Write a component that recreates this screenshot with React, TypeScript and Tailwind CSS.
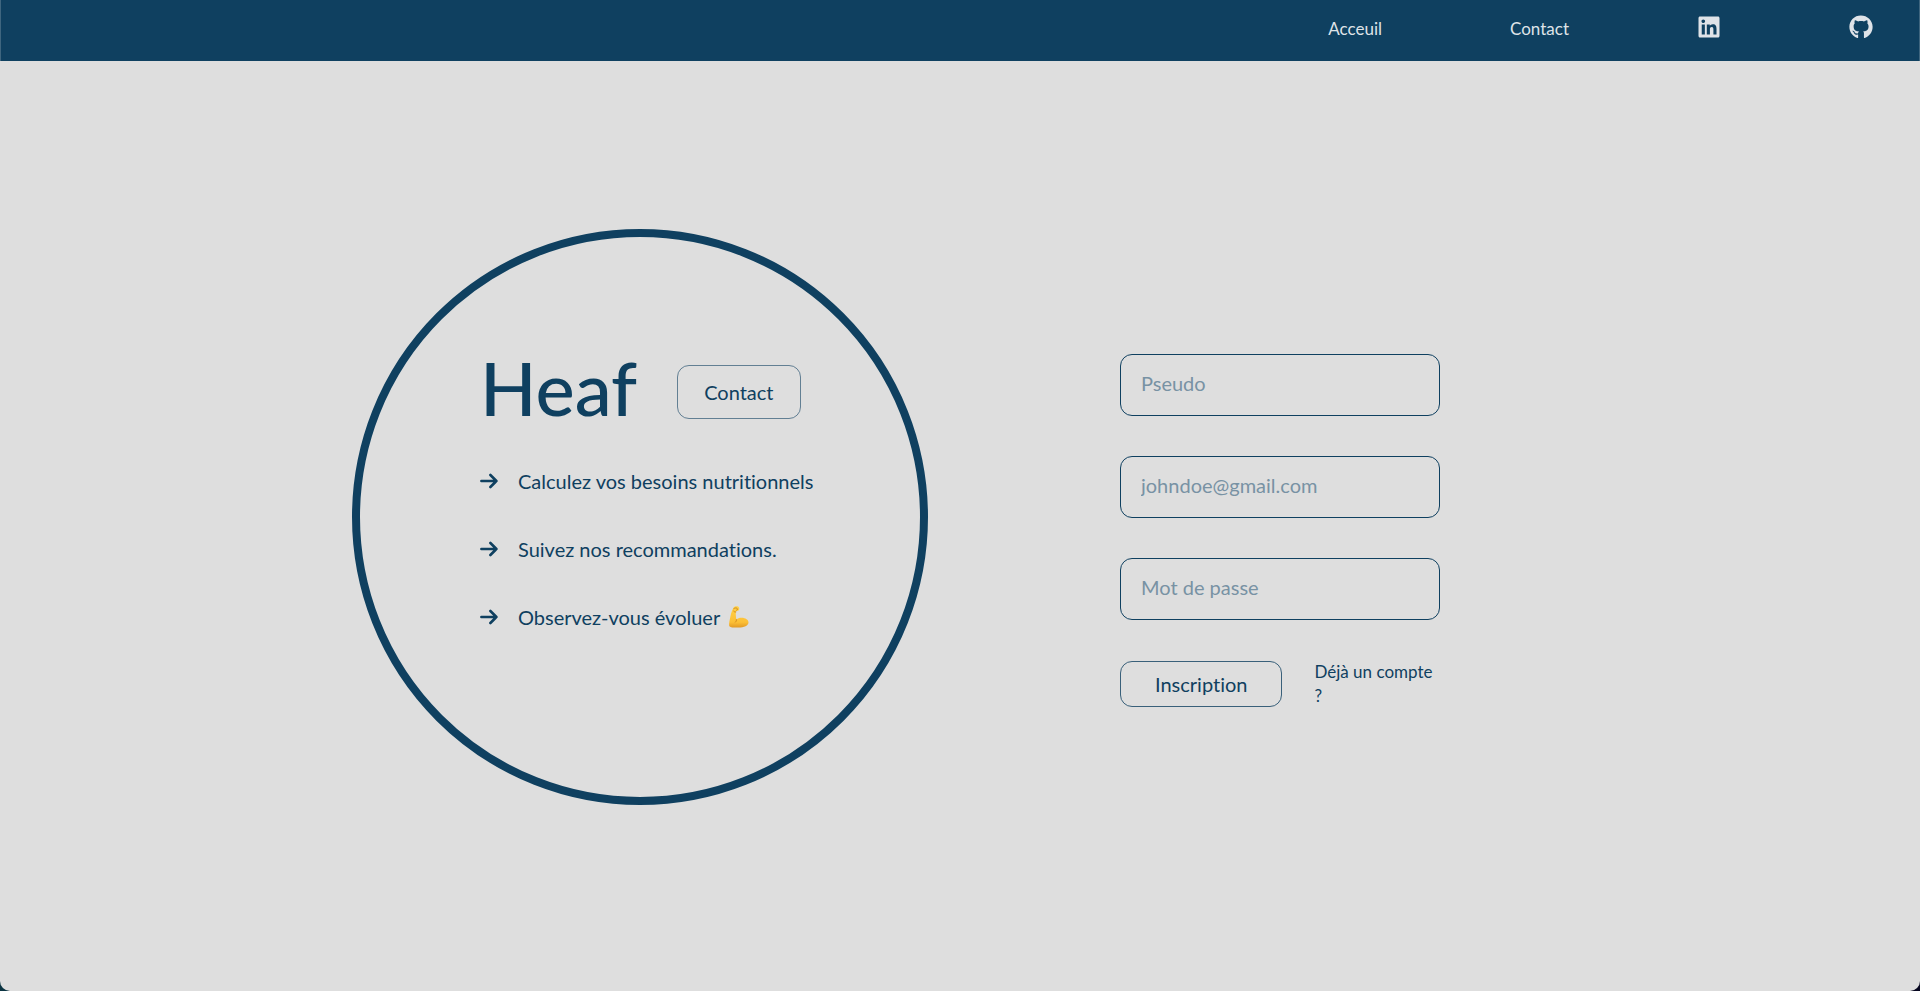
import React from "react";
import { FaGithub, FaLinkedin } from "react-icons/fa";

const benefits = [
  { text: "Calculez vos besoins nutritionnels", flexed: false },
  { text: "Suivez nos recommandations.", flexed: false },
  { text: "Observez-vous évoluer", flexed: true },
];

const fields = [
  { id: "pseudo", label: "Pseudo", type: "text", placeholder: "Pseudo" },
  { id: "email", label: "Email", type: "email", placeholder: "johndoe@gmail.com" },
  { id: "password", label: "Mot de passe", type: "password", placeholder: "Mot de passe" },
];

function Arrow() {
  return (
    <svg
      viewBox="0 0 18 18"
      aria-hidden="true"
      className="mr-5 size-[18px] shrink-0"
      fill="none"
      stroke="currentColor"
      strokeWidth="2.6"
      strokeLinecap="round"
      strokeLinejoin="round"
    >
      <path d="M1.400 9H16.400M10.400 3l6 6-6 6" />
    </svg>
  );
}

function Biceps() {
  return (
    <svg viewBox="0 0 22 24" role="img" aria-label="biceps" className="ml-2 inline-block h-6 w-[22px] shrink-0">
      <defs>
        <linearGradient id="skin" x1="0" y1="0" x2="0" y2="1">
          <stop offset="0" stopColor="#ffd24a" />
          <stop offset="0.75" stopColor="#fcbf36" />
          <stop offset="1" stopColor="#e29a25" />
        </linearGradient>
      </defs>
      <path
        d="M5.300 2.900C6 1.400 8 .8 9.600 1.300c1.400.4 1.900 1.700 1.600 3-.2 1-.9 1.600-2 1.700-.8.100-1.200.4-1.300 1-.3 1.900 0 5 .5 7.700 1.400-1.400 3.300-2 5.300-1.900 3.800.1 6.800 2 6.800 4.700 0 3-4.400 5-10.200 5.100-4.200.1-7.600-.1-8.700-1.100-.9-.9-.5-3.900.4-8 .8-3.700 1.500-7.600 3.300-10.600Z"
        fill="url(#skin)"
      />
      <path
        d="M5.800 3.600c1.300-.9 2.600-.9 3.400-.1.6.6.3 1.500-.5 1.700M8.400 14.700c.1.900-.2 1.700-.9 2.400M7.800 7c-.9.1-1.500-.2-2.100-.8"
        fill="none"
        stroke="#c9801c"
        strokeWidth="0.9"
        strokeLinecap="round"
      />
    </svg>
  );
}

export default function App() {
  return (
    <div className="flex min-h-screen flex-col bg-linear-to-r from-[#0b3442] to-[#05051f] font-[Lato,'Open_Sans',sans-serif] text-[#0f4060] [font-variant-ligatures:no-common-ligatures]">
      <header className="flex h-[61px] items-center justify-end border-x border-white/20 bg-[#0f4060] px-[46px] pb-2 text-[#dfe3e8]">
        <nav className="flex items-center gap-32 text-[17px]">
          <a href="#accueil" className="pt-1">
            Acceuil
          </a>
          <a href="#contact" className="pt-1">
            Contact
          </a>
          <a href="#linkedin" aria-label="LinkedIn">
            <FaLinkedin className="size-6" />
          </a>
          <a href="#github" aria-label="GitHub">
            <FaGithub className="size-6" />
          </a>
        </nav>
      </header>

      <main className="flex grow flex-col justify-center rounded-b-[10px] bg-[#dedede] pb-[18px]">
        <div className="mx-auto grid w-2/3 grid-cols-2 items-center justify-items-center">
          <section className="flex aspect-square w-9/10 flex-col rounded-full border-8 border-[#0f4060] pt-[114px] pl-30">
            <div className="flex items-center gap-10">
              <h1 className="text-[74px] leading-[74px] font-medium">Heaf</h1>
              <button className="mt-2 h-[54px] rounded-xl border border-[#0f4060]/60 px-[26px] text-xl">Contact</button>
            </div>
            <ul className="mt-[42px] flex flex-col gap-10 text-xl">
              {benefits.map((benefit) => (
                <li key={benefit.text} className="flex h-7 items-center whitespace-nowrap">
                  <Arrow />
                  {benefit.text}
                  {benefit.flexed && <Biceps />}
                </li>
              ))}
            </ul>
          </section>

          <form className="mt-7 flex w-1/2 flex-col gap-10">
            {fields.map((field) => (
              <input
                key={field.id}
                id={field.id}
                type={field.type}
                aria-label={field.label}
                placeholder={field.placeholder}
                className="block h-[62px] w-full rounded-xl border border-[#0f4060] px-5 pb-1 text-xl placeholder:text-[#7892a4]"
              />
            ))}
            <div className="flex items-center gap-8">
              <button type="submit" className="h-[46px] shrink-0 rounded-xl border border-[#0f4060]/80 px-[34px] text-xl">
                Inscription
              </button>
              <a href="#connexion" className="text-[17px] leading-6">
                Déjà un compte ?
              </a>
            </div>
          </form>
        </div>
      </main>
    </div>
  );
}
